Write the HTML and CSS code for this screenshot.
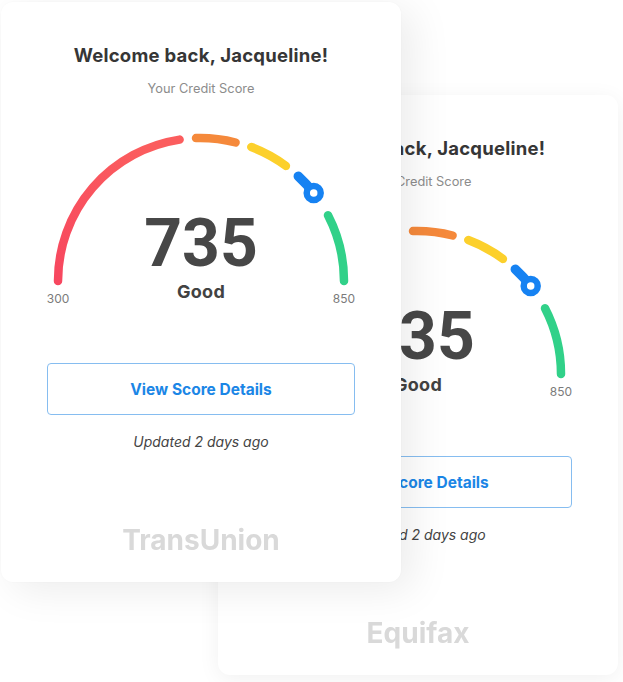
FILE: index.html
```html
<!DOCTYPE html>
<html lang="en">
<head>
<meta charset="utf-8">
<title>Credit Score</title>
<link rel="stylesheet" href="styles.css">
</head>
<body>
<div class="stage">
  <section class="card card-back">
    <h1 class="title">Welcome back, Jacqueline!</h1>
    <p class="subtitle">Your Credit Score</p>
    <div class="gauge">
      <svg class="gauge-svg" width="400" height="190" viewBox="0 0 400 190">
        <defs>
          <linearGradient id="redB" x1="0" y1="1" x2="0.6" y2="0">
            <stop offset="0" stop-color="#f7475f"/>
            <stop offset="1" stop-color="#fb5d5e"/>
          </linearGradient>
        </defs>
        <g fill="none" stroke-width="8.5" stroke-linecap="round">
          <path d="M57 159 A143 143 0 0 1 178.6 17.6" stroke="url(#redB)"/>
          <path d="M195 16.1 A143 143 0 0 1 234.6 20.5" stroke="#f5893b"/>
          <path d="M250.3 25.1 A143 143 0 0 1 284.9 43.9" stroke="#fcd02c"/>
          <path d="M297.3 54.3 A143 143 0 0 1 312.7 71" stroke="#1682f2" stroke-width="9.5"/>
          <path d="M327 93.2 A143 143 0 0 1 343 159" stroke="#31d189"/>
        </g>
        <circle cx="312.7" cy="71" r="7" fill="#fff" stroke="#1682f2" stroke-width="6.5"/>
        <text class="gauge-label" x="57" y="180.7" text-anchor="middle">300</text>
        <text class="gauge-label" x="343" y="180.7" text-anchor="middle">850</text>
      </svg>
      <div class="score">
        <div class="score-num">735</div>
        <div class="score-word">Good</div>
      </div>
    </div>
    <div class="btn">View Score Details</div>
    <p class="updated">Updated 2 days ago</p>
    <div class="bureau">Equifax</div>
  </section>

  <section class="card card-front">
    <h1 class="title">Welcome back, Jacqueline!</h1>
    <p class="subtitle">Your Credit Score</p>
    <div class="gauge">
      <svg class="gauge-svg" width="400" height="190" viewBox="0 0 400 190">
        <defs>
          <linearGradient id="redF" x1="0" y1="1" x2="0.6" y2="0">
            <stop offset="0" stop-color="#f7475f"/>
            <stop offset="1" stop-color="#fb5d5e"/>
          </linearGradient>
        </defs>
        <g fill="none" stroke-width="8.5" stroke-linecap="round">
          <path d="M57 159 A143 143 0 0 1 178.6 17.6" stroke="url(#redF)"/>
          <path d="M195 16.1 A143 143 0 0 1 234.6 20.5" stroke="#f5893b"/>
          <path d="M250.3 25.1 A143 143 0 0 1 284.9 43.9" stroke="#fcd02c"/>
          <path d="M297.3 54.3 A143 143 0 0 1 312.7 71" stroke="#1682f2" stroke-width="9.5"/>
          <path d="M327 93.2 A143 143 0 0 1 343 159" stroke="#31d189"/>
        </g>
        <circle cx="312.7" cy="71" r="7" fill="#fff" stroke="#1682f2" stroke-width="6.5"/>
        <text class="gauge-label" x="57" y="180.7" text-anchor="middle">300</text>
        <text class="gauge-label" x="343" y="180.7" text-anchor="middle">850</text>
      </svg>
      <div class="score">
        <div class="score-num">735</div>
        <div class="score-word">Good</div>
      </div>
    </div>
    <div class="btn">View Score Details</div>
    <p class="updated">Updated 2 days ago</p>
    <div class="bureau">TransUnion</div>
  </section>
</div>
</body>
</html>
```
FILE: styles.css
```css
* { box-sizing: border-box; }

html, body {
  margin: 0;
  padding: 0;
  background: #ffffff;
}

body {
  width: 623px;
  height: 682px;
  overflow: hidden;
  font-family: Inter, "Liberation Sans", sans-serif;
}

.stage {
  display: grid;
  padding: 2px 0 0 1px;
}

.card {
  grid-area: 1 / 1;
  width: 400px;
  height: 580px;
  background: #ffffff;
  border-radius: 12px;
  display: flex;
  flex-direction: column;
  align-items: center;
  padding-top: 41px;
}

.card-back {
  margin: 93px 0 0 217px;
  box-shadow: 0 4px 22px rgba(0, 0, 0, 0.06);
}

.card-front {
  box-shadow: 12px 8px 40px rgba(0, 0, 0, 0.08), 0 0 2px rgba(0, 0, 0, 0.03);
}

.title {
  margin: 0;
  font-size: 18.5px;
  line-height: 24px;
  font-weight: 700;
  color: #363636;
  letter-spacing: 0.25px;
}

.subtitle {
  margin: 14px 0 0;
  font-size: 12.8px;
  line-height: 16px;
  color: #8c8c8c;
}

.gauge {
  margin-top: 25px;
  width: 400px;
  height: 190px;
  display: grid;
}

.gauge-svg {
  grid-area: 1 / 1;
  display: block;
}

.gauge-label {
  font-family: Inter, "Liberation Sans", sans-serif;
  font-size: 12px;
  fill: #7b7b7b;
}

.score {
  grid-area: 1 / 1;
  display: flex;
  flex-direction: column;
  align-items: center;
  padding-top: 87px;
}

.score-num {
  font-family: Roboto, "Liberation Sans", sans-serif;
  font-weight: 700;
  font-size: 66px;
  line-height: 70px;
  color: #474747;
}

.score-word {
  margin-top: 2px;
  font-size: 18px;
  line-height: 22px;
  font-weight: 700;
  color: #424242;
  letter-spacing: 0.3px;
}

.btn {
  margin-top: 51px;
  width: 308px;
  height: 52px;
  border: 1px solid #86bdf0;
  border-radius: 4px;
  display: flex;
  align-items: center;
  justify-content: center;
  font-size: 15.5px;
  font-weight: 700;
  color: #1b86e6;
}

.updated {
  margin: 18px 0 0;
  font-size: 14px;
  line-height: 18px;
  font-style: italic;
  color: #444444;
}

.bureau {
  margin-top: 72px;
  font-size: 28px;
  line-height: 34px;
  font-weight: 700;
  color: #d9d9d9;
  filter: blur(0.5px);
}
```
